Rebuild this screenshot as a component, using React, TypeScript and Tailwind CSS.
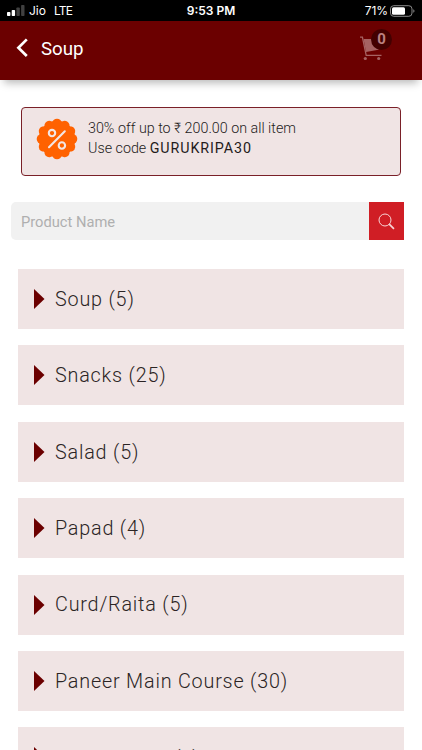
import React from "react";

interface Category {
  name: string;
  count: number;
}

const categories: Category[] = [
  { name: "Soup", count: 5 },
  { name: "Snacks", count: 25 },
  { name: "Salad", count: 5 },
  { name: "Papad", count: 4 },
  { name: "Curd/Raita", count: 5 },
  { name: "Paneer Main Course", count: 30 },
  { name: "Main Course", count: 5 },
];

const StatusBar: React.FC = () => (
  <div className="flex h-[21px] items-center justify-between bg-black pl-[7px] pr-[7px] font-['Inter',sans-serif] text-[12px] leading-none text-white">
    <div className="flex w-[120px] items-center">
      <svg className="h-[11px] w-[18px]" viewBox="0 0 18 11" fill="#fff">
        <rect x="0" y="7" width="3.4" height="4" rx="0.8" />
        <rect x="4.7" y="5" width="3.4" height="6" rx="0.8" />
        <rect x="9.4" y="2.5" width="3.4" height="8.5" rx="0.8" opacity="0.25" />
        <rect x="14.1" y="0" width="3.4" height="11" rx="0.8" opacity="0.25" />
      </svg>
      <span className="ml-[4px]">Jio</span>
      <span className="ml-[8px] tracking-[-0.8px]">LTE</span>
    </div>
    <span className="font-semibold">9:53 PM</span>
    <div className="flex w-[120px] items-center justify-end">
      <span className="tracking-[-0.1px]">71%</span>
      <svg className="ml-[2px] h-[12px] w-[25px]" viewBox="0 0 25 12" fill="none">
        <rect x="0.5" y="0.7" width="21.5" height="10.6" rx="3.2" stroke="#8a8a8a" />
        <rect x="2" y="2.2" width="13" height="7.6" rx="1.5" fill="#fff" />
        <path d="M23.3 4.2c1.6.6 1.6 3 0 3.6z" fill="#8a8a8a" />
      </svg>
    </div>
  </div>
);

const Header: React.FC = () => (
  <header className="flex h-[59px] items-center bg-[#6b0000] pl-[16px] pr-[28px] text-white shadow-[0_7px_8px_-4px_rgba(0,0,0,0.28)]">
    <button className="flex items-center" aria-label="Back">
      <svg className="mt-[-5px] h-[20px] w-[13px]" viewBox="0 0 13 20" fill="none">
        <path d="M10.8 1.4 2.4 9.7l8.4 8.3" stroke="#fff" strokeWidth="2.7" />
      </svg>
    </button>
    <h1 className="ml-[12px] mt-[-2px] text-[18.7px] font-normal">Soup</h1>
    <button className="relative ml-auto mt-[-9px] h-[32px] w-[34px]" aria-label="Cart">
      <svg className="absolute left-0 top-[6px] h-[25px] w-[24px]" viewBox="0 0 24 25" fill="none">
        <path d="M0 1.2h2.4l3.8 18.2h15.3" stroke="#a66262" strokeWidth="1.3" />
        <path d="M3.6 3h18.8l-4 10.7L6 15.9z" fill="#a66262" />
        <circle cx="5.3" cy="22.5" r="1.6" fill="#a66262" />
        <circle cx="18.7" cy="22.5" r="1.6" fill="#a66262" />
      </svg>
      <span className="absolute left-[11px] top-[-1px] flex h-[21px] w-[21px] items-center justify-center rounded-full bg-[#430000] text-[15px] font-bold text-[#b98080]">
        0
      </span>
    </button>
  </header>
);

const OfferBadge: React.FC = () => (
  <svg className="h-[42px] w-[42px] shrink-0" viewBox="-21 -21 42 42" fill="none">
    <circle r="18.2" fill="#ff6200" />
    {Array.from({ length: 12 }, (_, i) => (
      <circle key={i} cy="-15.5" r="4.8" fill="#ff6200" transform={`rotate(${i * 30})`} />
    ))}
    <g stroke="#f3e6e4" strokeWidth="2.1" strokeLinecap="round">
      <circle cx="-5" cy="-5.9" r="3.2" />
      <circle cx="4.9" cy="6.5" r="3.2" />
      <path d="M7.8-7.7-8 8.2" />
    </g>
  </svg>
);

const OfferCard: React.FC = () => (
  <section className="ml-[21px] mr-[21px] mt-[27px] flex h-[69px] rounded-[4px] border border-[#7a2028] bg-[#f0e4e4] pl-[14px] pt-[10px]">
    <OfferBadge />
    <div className="ml-[10px] text-[14.3px] font-light leading-[20px] text-[#241b1b]">
      <p className="whitespace-nowrap">30% off up to ₹ 200.00 on all item</p>
      <p className="whitespace-nowrap">
        Use code <span className="font-normal tracking-[0.9px]">GURUKRIPA30</span>
      </p>
    </div>
  </section>
);

const SearchBar: React.FC = () => (
  <div className="ml-[11px] mr-[18px] mt-[26px] flex h-[38px]">
    <input
      type="text"
      placeholder="Product Name"
      className="min-w-0 flex-1 rounded-l-[5px] bg-[#f1f1f1] px-[10px] pt-[2px] text-[14.7px] placeholder:text-[#afafaf] focus:outline-none"
    />
    <button className="flex w-[35px] items-center justify-center bg-[#d01e25]" aria-label="Search">
      <svg className="h-[17px] w-[17px]" viewBox="0 0 17 17" fill="none" stroke="#f7d5d6">
        <circle cx="7" cy="7" r="6" strokeWidth="1" />
        <path d="m11.2 11.2 4.8 4.6" strokeWidth="1.7" />
      </svg>
    </button>
  </div>
);

const CategoryRow: React.FC<Category> = ({ name, count }) => (
  <li className="group flex h-[60px] shrink-0 items-center bg-[#f0e4e4] pl-[16px]">
    <svg className="h-[20px] w-[11px]" viewBox="0 0 11 20" fill="#6b0000">
      <path d="M0 0 10.5 10 0 20z" />
    </svg>
    <span className="ml-[10.5px] whitespace-nowrap pt-[1.4px] text-[19.8px] font-light tracking-[0.8px] text-[#2b2424] group-last:pt-[3px] group-last:tracking-[0.4px]">
      {name} ({count})
    </span>
  </li>
);

export default function App() {
  return (
    <div className="h-[750px] w-full overflow-hidden bg-white font-['Roboto',sans-serif]">
      <StatusBar />
      <Header />
      <OfferCard />
      <SearchBar />
      <ul className="ml-[17.5px] mr-[18px] mt-[29px] flex flex-col gap-[16.4px]">
        {categories.map((category) => (
          <CategoryRow key={category.name} {...category} />
        ))}
      </ul>
    </div>
  );
}
